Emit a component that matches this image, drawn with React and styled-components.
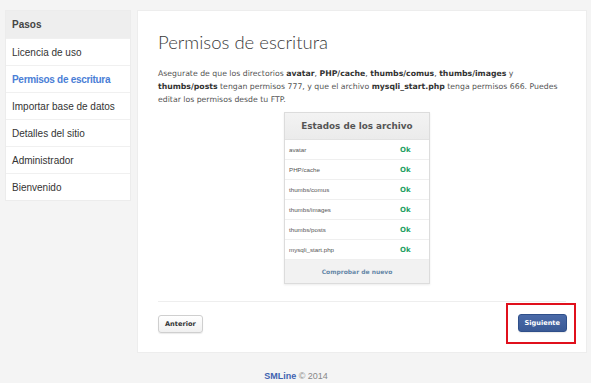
import React from 'react';
import styled, { createGlobalStyle } from 'styled-components';

const GlobalStyle = createGlobalStyle`
    html, body {
        margin: 0;
        padding: 0;
        background: #f4f4f4;
    }
    body {
        font-family: "Liberation Sans", Arial, sans-serif;
        color: #333;
    }
`;

const steps = [
    'Licencia de uso',
    'Permisos de escritura',
    'Importar base de datos',
    'Detalles del sitio',
    'Administrador',
    'Bienvenido',
];

const files = [
    'avatar',
    'PHP/cache',
    'thumbs/comus',
    'thumbs/images',
    'thumbs/posts',
    'mysqli_start.php',
];

const App = () => {
    return (
        <>
            <GlobalStyle />
            <Page>
                <Layout>
                    <Sidebar>
                        <SidebarHeader>Pasos</SidebarHeader>
                        {steps.map((step) => (
                            <SidebarItem
                                key={step}
                                $active={step === 'Permisos de escritura'}
                            >
                                {step}
                            </SidebarItem>
                        ))}
                    </Sidebar>
                    <Card>
                        <Title>Permisos de escritura</Title>
                        <Intro>
                            Asegurate de que los directorios <b>avatar</b>,{' '}
                            <b>PHP/cache</b>, <b>thumbs/comus</b>,{' '}
                            <b>thumbs/images</b> y <b>thumbs/posts</b> tengan
                            permisos 777, y que el archivo{' '}
                            <b>mysqli_start.php</b> tenga permisos 666. Puedes
                            editar los permisos desde tu FTP.
                        </Intro>
                        <StatusBox>
                            <StatusHeader>Estados de los archivo</StatusHeader>
                            {files.map((file) => (
                                <StatusRow key={file}>
                                    <FileName>{file}</FileName>
                                    <FileState>Ok</FileState>
                                </StatusRow>
                            ))}
                            <StatusFooter href="#">Comprobar de nuevo</StatusFooter>
                        </StatusBox>
                        <Actions>
                            <Button>Anterior</Button>
                            <Highlight>
                                <Button $primary>Siguiente</Button>
                            </Highlight>
                        </Actions>
                    </Card>
                </Layout>
                <Footer>
                    <Brand>SMLine</Brand> &copy; 2014
                </Footer>
            </Page>
        </>
    );
};

export default App;

// Styled Components
const Page = styled.div`
    width: 591px;
    height: 383px;
    box-sizing: border-box;
    padding: 10px 4px 0 5px;
    overflow: hidden;
`;

const Layout = styled.div`
    display: flex;
    align-items: flex-start;
    gap: 6px;
`;

const Sidebar = styled.div`
    width: 126px;
    flex-shrink: 0;
    background: #fff;
    border: 1px solid #ececec;
    box-sizing: border-box;
`;

const SidebarHeader = styled.div`
    height: 27px;
    display: flex;
    align-items: center;
    padding-left: 6px;
    background: #eeeeee;
    font-size: 10px;
    font-weight: bold;
    color: #444;
`;

const SidebarItem = styled.div`
    height: 27px;
    box-sizing: border-box;
    display: flex;
    align-items: center;
    padding-left: 6px;
    border-top: 1px solid #f0f0f0;
    font-size: 10px;
    font-weight: ${(p) => (p.$active ? 'bold' : 'normal')};
    letter-spacing: ${(p) => (p.$active ? '-0.3px' : '0')};
    color: ${(p) => (p.$active ? '#4a7ed6' : '#333')};

    &:first-of-type {
        border-top: none;
    }
`;

const Card = styled.div`
    flex: 1;
    background: #fff;
    border: 1px solid #ededed;
    padding: 19px 20px 0 20px;
`;

const Title = styled.h1`
    margin: 0;
    font-family: Lato, "Open Sans", sans-serif;
    font-size: 18.5px;
    font-weight: 300;
    line-height: 24px;
    color: #3a3a3a;
`;

const Intro = styled.p`
    margin: 13px 0 0 0;
    font-family: "DejaVu Sans", Verdana, sans-serif;
    font-size: 7.75px;
    line-height: 13px;
    color: #555;

    b {
        color: #333;
    }
`;

const StatusBox = styled.div`
    width: 144px;
    margin: 6px 0 0 126px;
    border: 1px solid #dcdcdc;
    box-shadow: 0 1px 2px rgba(0, 0, 0, 0.08);
    background: #fff;
`;

const StatusHeader = styled.div`
    height: 26px;
    display: flex;
    align-items: center;
    justify-content: center;
    background: linear-gradient(#f3f3f3, #ebebeb);
    border-bottom: 1px solid #e2e2e2;
    font-family: "DejaVu Sans", Verdana, sans-serif;
    font-size: 8.8px;
    font-weight: bold;
    color: #555;
`;

const StatusRow = styled.div`
    height: 20px;
    box-sizing: border-box;
    display: grid;
    grid-template-columns: 1fr 20px;
    align-items: center;
    padding: 0 9px 0 4px;
    border-bottom: 1px solid #efefef;
    font-family: "Liberation Sans", Arial, sans-serif;
    font-size: 6.2px;
`;

const FileName = styled.span`
    color: #555;
`;

const FileState = styled.span`
    font-family: "DejaVu Sans", Verdana, sans-serif;
    color: #25a065;
    font-weight: bold;
    font-size: 7px;
`;

const StatusFooter = styled.a`
    height: 23px;
    display: flex;
    align-items: center;
    justify-content: center;
    background: #f2f2f2;
    font-family: "DejaVu Sans", Verdana, sans-serif;
    font-size: 6px;
    font-weight: bold;
    color: #6688a8;
    text-decoration: none;
`;

const Actions = styled.div`
    margin-top: 17px;
    border-top: 1px solid #eeeeee;
    padding: 1px 0 8px 0;
    display: flex;
    justify-content: space-between;
    align-items: flex-start;

    & > button {
        margin-top: 12px;
    }
`;

const Highlight = styled.div`
    margin-right: -10px;
    padding: 9px 7px 10px 10px;
    border: 2px solid #e0101c;
    display: flex;
`;

const Button = styled.button`
    height: 18px;
    padding: 0 6px;
    border-radius: 3px;
    font-family: "DejaVu Sans", Verdana, sans-serif;
    font-size: 6.6px;
    font-weight: bold;
    cursor: pointer;
    border: 1px solid ${(p) => (p.$primary ? '#2f4f8a' : '#cfcfcf')};
    background: ${(p) =>
        p.$primary
            ? 'linear-gradient(#4a6aa8, #3a5a96)'
            : 'linear-gradient(#ffffff, #f0f0f0)'};
    color: ${(p) => (p.$primary ? '#fff' : '#333')};
    box-shadow: 0 1px 1px rgba(0, 0, 0, 0.08);
`;

const Footer = styled.div`
    margin-top: 18px;
    text-align: center;
    font-size: 9px;
    color: #888;
`;

const Brand = styled.span`
    color: #3f63b0;
    font-weight: bold;
`;
